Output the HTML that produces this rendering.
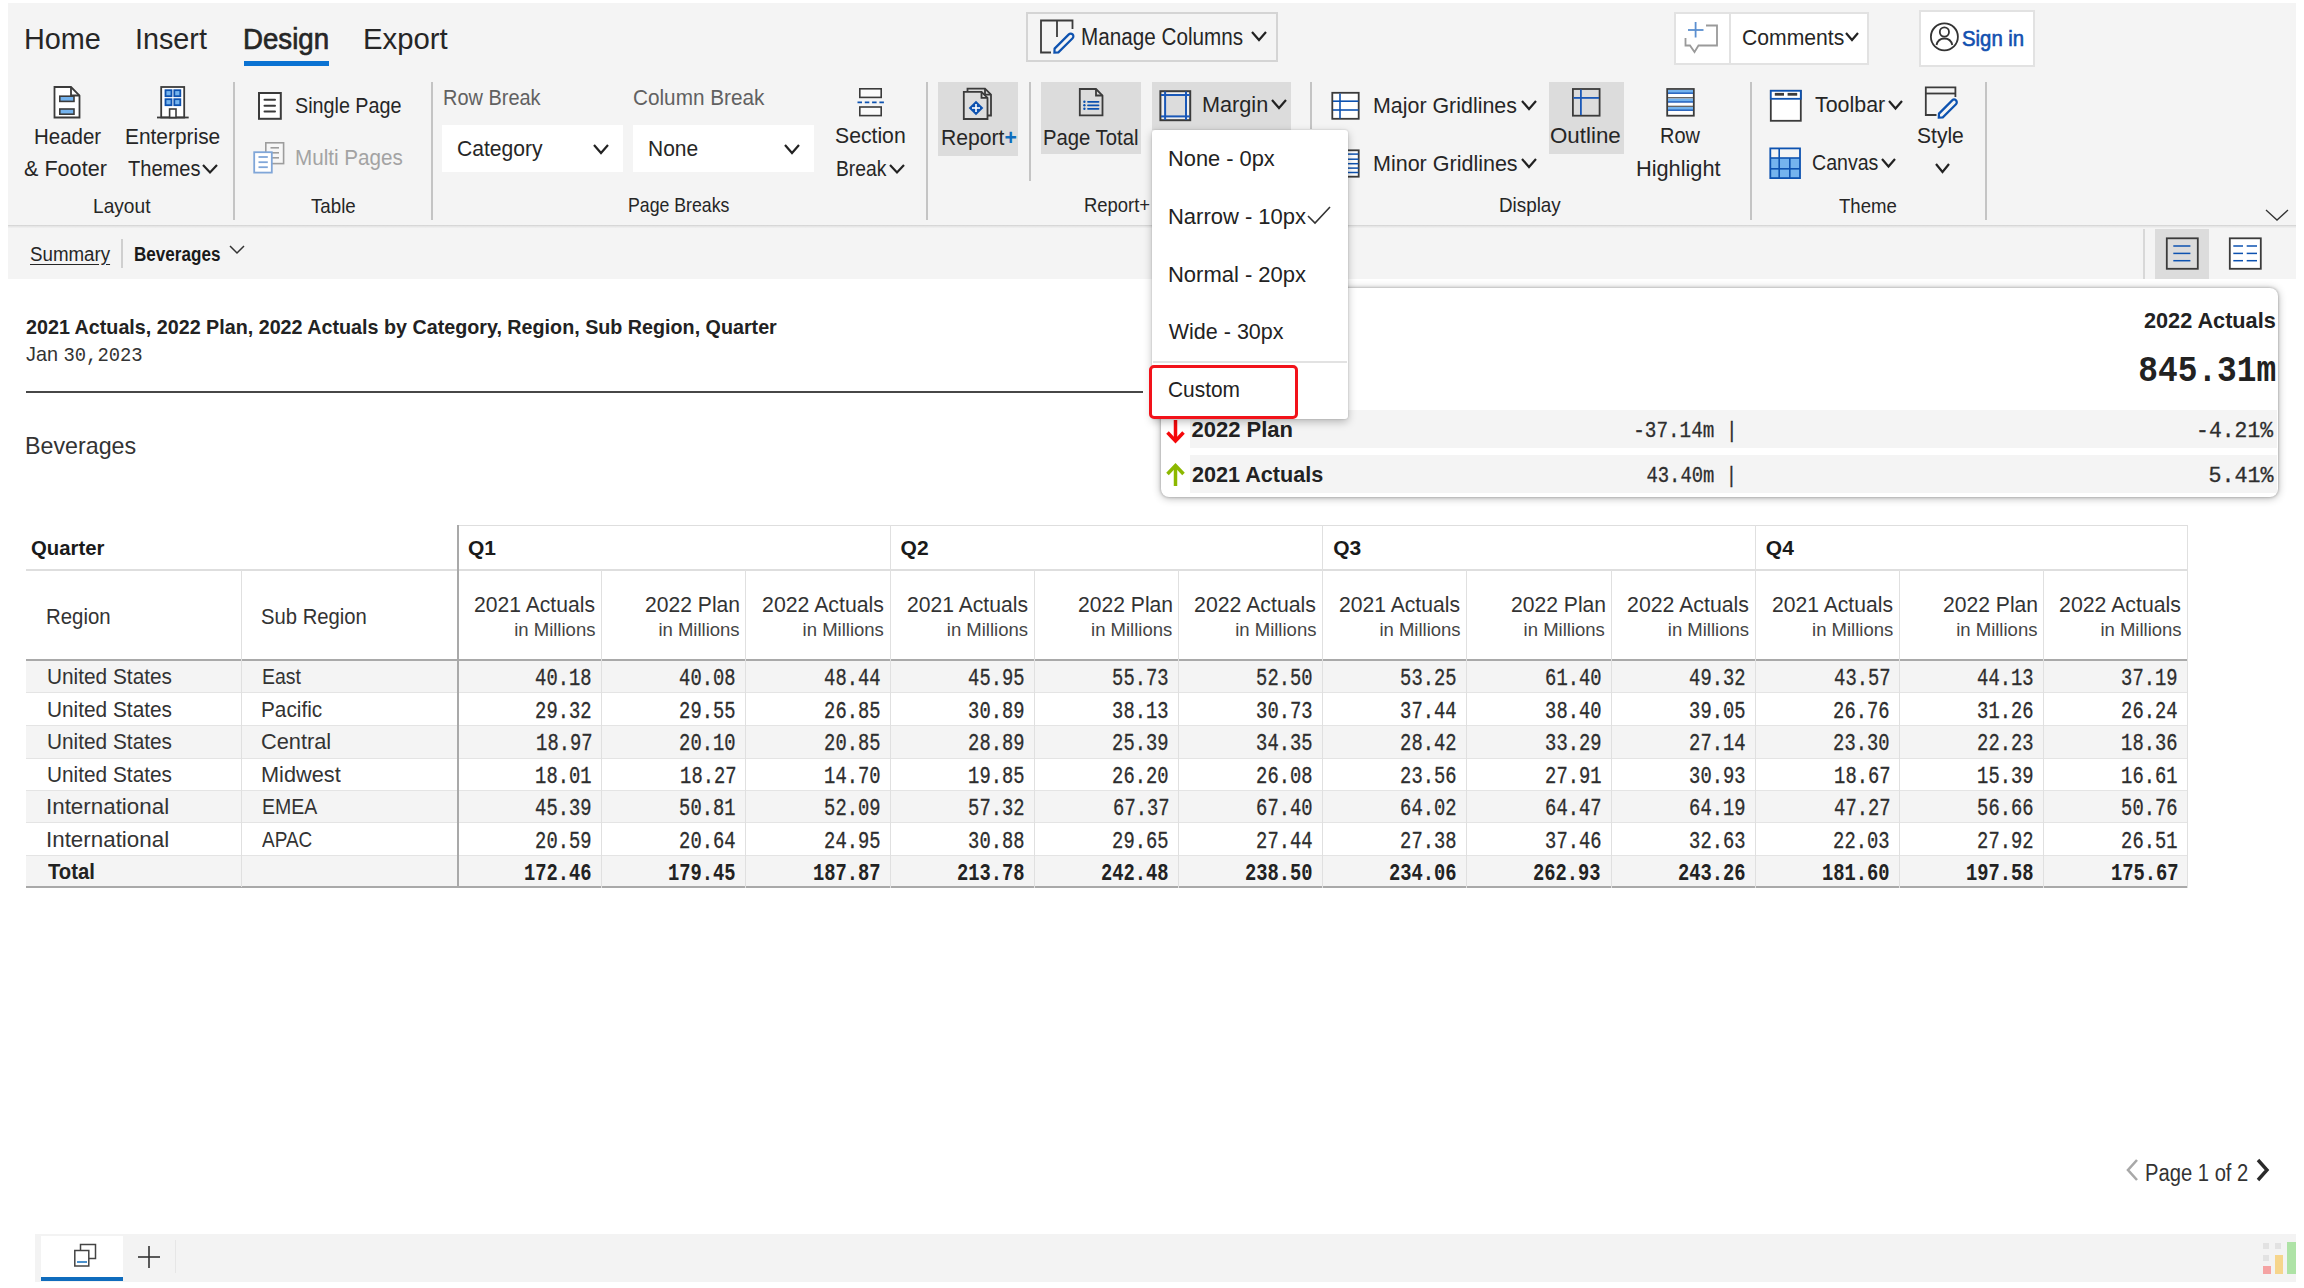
<!DOCTYPE html>
<html><head><meta charset="utf-8"><style>
html,body{margin:0;padding:0;background:#fff;width:2304px;height:1288px;overflow:hidden;position:relative}
.t{position:absolute;white-space:nowrap;line-height:normal}
.r{position:absolute;box-sizing:border-box}
</style></head><body>
<div class="r" style="left:8px;top:3px;width:2288px;height:222px;background:#f4f4f4;"></div>
<div class="r" style="left:8px;top:225px;width:2288px;height:3px;background:linear-gradient(#cfcfcf,#e6e6e6 50%,#f0f0f0);"></div>
<div class="r" style="left:8px;top:228px;width:2288px;height:51px;background:#f4f4f4;"></div>
<div class="r" style="left:35px;top:1234px;width:2261px;height:48px;background:#f3f3f3;"></div>
<div class="t" id="t1" style="top:21.9px;font-size:30px;color:#262626;font-family:'Liberation Sans', sans-serif;left:24.08px;transform-origin:left top;transform:scaleX(0.9610);">Home</div>
<div class="t" id="t2" style="top:21.9px;font-size:30px;color:#262626;font-family:'Liberation Sans', sans-serif;left:135.08px;transform-origin:left top;transform:scaleX(0.9589);">Insert</div>
<div class="t" id="t3" style="top:21.9px;font-size:30px;color:#262626;font-family:'Liberation Sans', sans-serif;left:243.16px;transform-origin:left top;transform:scaleX(0.9222);-webkit-text-stroke:0.7px #262626;">Design</div>
<div class="t" id="t4" style="top:21.9px;font-size:30px;color:#262626;font-family:'Liberation Sans', sans-serif;left:363.05px;transform-origin:left top;transform:scaleX(0.9765);">Export</div>
<div class="r" style="left:244px;top:60.5px;width:85px;height:5px;background:#0a72d2;"></div>
<div class="r" style="left:1026px;top:12px;width:252px;height:50px;background:transparent;border:2px solid #d4d4d4"></div>
<div class="t" id="t5" style="top:23.6px;font-size:23px;color:#262626;font-family:'Liberation Sans', sans-serif;left:1081.20px;transform-origin:left top;transform:scaleX(0.8989);">Manage Columns</div>
<svg class="r" style="left:1250px;top:30px;" width="18" height="12" viewBox="0 0 18 12"><polyline points="2,2 9.0,10 16,2" fill="none" stroke="#222" stroke-width="2.2" stroke-linecap="butt"/></svg>
<div class="r" style="left:1674px;top:12px;width:195px;height:53px;background:#fff;border:2px solid #e2e2e2"></div>
<div class="r" style="left:1729px;top:12px;width:2px;height:53px;background:#e2e2e2;"></div>
<div class="t" id="t6" style="top:25.1px;font-size:22px;color:#262626;font-family:'Liberation Sans', sans-serif;left:1742.04px;transform-origin:left top;transform:scaleX(0.9619);">Comments</div>
<svg class="r" style="left:1844px;top:31px;" width="16" height="11" viewBox="0 0 16 11"><polyline points="2,2 8.0,9 14,2" fill="none" stroke="#222" stroke-width="2.2" stroke-linecap="butt"/></svg>
<div class="r" style="left:1919px;top:10px;width:116px;height:57px;background:#fff;border:2px solid #e2e2e2"></div>
<div class="t" id="t7" style="top:25.5px;font-size:22px;color:#1150b0;font-family:'Liberation Sans', sans-serif;left:1962.08px;transform-origin:left top;transform:scaleX(0.9242);-webkit-text-stroke:0.6px #1150b0;">Sign in</div>
<div class="r" style="left:233px;top:82px;width:2px;height:138px;background:#c4c4c4;"></div>
<div class="r" style="left:431px;top:82px;width:2px;height:138px;background:#c4c4c4;"></div>
<div class="r" style="left:926px;top:82px;width:2px;height:138px;background:#c4c4c4;"></div>
<div class="r" style="left:1029px;top:82px;width:2px;height:99px;background:#c4c4c4;"></div>
<div class="r" style="left:1310px;top:82px;width:2px;height:47px;background:#c4c4c4;"></div>
<div class="r" style="left:1750px;top:82px;width:2px;height:138px;background:#c4c4c4;"></div>
<div class="r" style="left:1985px;top:82px;width:2px;height:138px;background:#c4c4c4;"></div>
<div class="t" id="t8" style="top:123.5px;font-size:22px;color:#262626;font-family:'Liberation Sans', sans-serif;left:33.57px;transform-origin:left top;transform:scaleX(0.9296);">Header</div>
<div class="t" id="t9" style="top:155.5px;font-size:22px;color:#262626;font-family:'Liberation Sans', sans-serif;left:24.02px;transform-origin:left top;transform:scaleX(0.9819);">&amp; Footer</div>
<div class="t" id="t10" style="top:123.5px;font-size:22px;color:#262626;font-family:'Liberation Sans', sans-serif;left:125.05px;transform-origin:left top;transform:scaleX(0.9495);">Enterprise</div>
<div class="t" id="t11" style="top:155.5px;font-size:22px;color:#262626;font-family:'Liberation Sans', sans-serif;left:127.60px;transform-origin:left top;transform:scaleX(0.9114);">Themes</div>
<svg class="r" style="left:201px;top:163px;" width="18" height="11.5" viewBox="0 0 18 11.5"><polyline points="2,2 9.0,9.5 16,2" fill="none" stroke="#222" stroke-width="2.2" stroke-linecap="butt"/></svg>
<div class="t" id="t12" style="top:193.7px;font-size:21px;color:#262626;font-family:'Liberation Sans', sans-serif;left:93.49px;transform-origin:left top;transform:scaleX(0.9113);">Layout</div>
<div class="t" id="t13" style="top:92.7px;font-size:22px;color:#262626;font-family:'Liberation Sans', sans-serif;left:294.70px;transform-origin:left top;transform:scaleX(0.8974);">Single Page</div>
<div class="t" id="t14" style="top:145.1px;font-size:22px;color:#a3a3a3;font-family:'Liberation Sans', sans-serif;left:294.66px;transform-origin:left top;transform:scaleX(0.9386);">Multi Pages</div>
<div class="t" id="t15" style="top:193.7px;font-size:21px;color:#262626;font-family:'Liberation Sans', sans-serif;left:310.50px;transform-origin:left top;transform:scaleX(0.8900);">Table</div>
<div class="t" id="t16" style="top:85.3px;font-size:22px;color:#616161;font-family:'Liberation Sans', sans-serif;left:442.79px;transform-origin:left top;transform:scaleX(0.9065);">Row Break</div>
<div class="r" style="left:442px;top:125px;width:181px;height:47px;background:#fff;"></div>
<div class="t" id="t17" style="top:136.3px;font-size:22px;color:#262626;font-family:'Liberation Sans', sans-serif;left:457.04px;transform-origin:left top;transform:scaleX(0.9591);">Category</div>
<svg class="r" style="left:592px;top:143px;" width="18" height="12" viewBox="0 0 18 12"><polyline points="2,2 9.0,10 16,2" fill="none" stroke="#222" stroke-width="2.2" stroke-linecap="butt"/></svg>
<div class="t" id="t18" style="top:85.3px;font-size:22px;color:#616161;font-family:'Liberation Sans', sans-serif;left:633.06px;transform-origin:left top;transform:scaleX(0.9424);">Column Break</div>
<div class="r" style="left:633px;top:125px;width:181px;height:47px;background:#fff;"></div>
<div class="t" id="t19" style="top:136.3px;font-size:22px;color:#262626;font-family:'Liberation Sans', sans-serif;left:648.05px;transform-origin:left top;transform:scaleX(0.9529);">None</div>
<svg class="r" style="left:783px;top:143px;" width="18" height="12" viewBox="0 0 18 12"><polyline points="2,2 9.0,10 16,2" fill="none" stroke="#222" stroke-width="2.2" stroke-linecap="butt"/></svg>
<div class="t" id="t20" style="top:123.1px;font-size:22px;color:#262626;font-family:'Liberation Sans', sans-serif;left:835.44px;transform-origin:left top;transform:scaleX(0.9634);">Section</div>
<div class="t" id="t21" style="top:155.8px;font-size:22px;color:#262626;font-family:'Liberation Sans', sans-serif;left:835.52px;transform-origin:left top;transform:scaleX(0.8772);">Break</div>
<svg class="r" style="left:888px;top:163px;" width="18" height="11.5" viewBox="0 0 18 11.5"><polyline points="2,2 9.0,9.5 16,2" fill="none" stroke="#222" stroke-width="2.2" stroke-linecap="butt"/></svg>
<div class="t" id="t22" style="top:192.7px;font-size:21px;color:#262626;font-family:'Liberation Sans', sans-serif;left:627.96px;transform-origin:left top;transform:scaleX(0.8437);">Page Breaks</div>
<div class="r" style="left:938px;top:82px;width:80px;height:74px;background:#dcdcdc;"></div>
<div class="t" id="t23" style="top:124.8px;font-size:22px;color:#262626;font-family:'Liberation Sans', sans-serif;left:940.54px;transform-origin:left top;transform:scaleX(0.9610);">Report<span style="color:#0f6cbd;font-weight:700">+</span></div>
<div class="r" style="left:1041px;top:82px;width:100px;height:72px;background:#dcdcdc;"></div>
<div class="t" id="t24" style="top:124.8px;font-size:22px;color:#262626;font-family:'Liberation Sans', sans-serif;left:1043.38px;transform-origin:left top;transform:scaleX(0.9216);">Page Total</div>
<div class="r" style="left:1152px;top:82px;width:139px;height:48px;background:#dcdcdc;"></div>
<div class="t" id="t25" style="top:91.9px;font-size:22px;color:#262626;font-family:'Liberation Sans', sans-serif;left:1202.42px;transform-origin:left top;transform:scaleX(0.9846);">Margin</div>
<svg class="r" style="left:1270px;top:98px;" width="18" height="12" viewBox="0 0 18 12"><polyline points="2,2 9.0,10 16,2" fill="none" stroke="#222" stroke-width="2.2" stroke-linecap="butt"/></svg>
<div class="t" id="t26" style="top:192.7px;font-size:21px;color:#262626;font-family:'Liberation Sans', sans-serif;left:1084.12px;transform-origin:left top;transform:scaleX(0.8784);">Report+</div>
<div class="t" id="t27" style="top:92.6px;font-size:22px;color:#262626;font-family:'Liberation Sans', sans-serif;left:1373.03px;transform-origin:left top;transform:scaleX(0.9728);">Major Gridlines</div>
<svg class="r" style="left:1520px;top:99px;" width="18" height="12" viewBox="0 0 18 12"><polyline points="2,2 9.0,10 16,2" fill="none" stroke="#222" stroke-width="2.2" stroke-linecap="butt"/></svg>
<div class="t" id="t28" style="top:150.5px;font-size:22px;color:#262626;font-family:'Liberation Sans', sans-serif;left:1373.02px;transform-origin:left top;transform:scaleX(0.9776);">Minor Gridlines</div>
<svg class="r" style="left:1520px;top:157px;" width="18" height="12" viewBox="0 0 18 12"><polyline points="2,2 9.0,10 16,2" fill="none" stroke="#222" stroke-width="2.2" stroke-linecap="butt"/></svg>
<div class="r" style="left:1549px;top:82px;width:75px;height:72px;background:#dcdcdc;"></div>
<div class="t" id="t29" style="top:123.1px;font-size:22px;color:#262626;font-family:'Liberation Sans', sans-serif;left:1550.49px;transform-origin:left top;transform:scaleX(1.0147);">Outline</div>
<div class="t" id="t30" style="top:123.1px;font-size:22px;color:#262626;font-family:'Liberation Sans', sans-serif;left:1660.49px;transform-origin:left top;transform:scaleX(0.9070);">Row</div>
<div class="t" id="t31" style="top:155.5px;font-size:22px;color:#262626;font-family:'Liberation Sans', sans-serif;left:1636.01px;transform-origin:left top;transform:scaleX(0.9882);">Highlight</div>
<div class="t" id="t32" style="top:192.7px;font-size:21px;color:#262626;font-family:'Liberation Sans', sans-serif;left:1498.70px;transform-origin:left top;transform:scaleX(0.8971);">Display</div>
<div class="t" id="t33" style="top:92.4px;font-size:22px;color:#262626;font-family:'Liberation Sans', sans-serif;left:1814.70px;transform-origin:left top;transform:scaleX(0.9722);">Toolbar</div>
<svg class="r" style="left:1887px;top:99px;" width="17" height="11.5" viewBox="0 0 17 11.5"><polyline points="2,2 8.5,9.5 15,2" fill="none" stroke="#222" stroke-width="2.2" stroke-linecap="butt"/></svg>
<div class="t" id="t34" style="top:149.9px;font-size:22px;color:#262626;font-family:'Liberation Sans', sans-serif;left:1812.11px;transform-origin:left top;transform:scaleX(0.8904);">Canvas</div>
<svg class="r" style="left:1880px;top:157px;" width="17" height="11.5" viewBox="0 0 17 11.5"><polyline points="2,2 8.5,9.5 15,2" fill="none" stroke="#222" stroke-width="2.2" stroke-linecap="butt"/></svg>
<div class="t" id="t35" style="top:123.0px;font-size:22px;color:#262626;font-family:'Liberation Sans', sans-serif;left:1917.24px;transform-origin:left top;transform:scaleX(0.9574);">Style</div>
<svg class="r" style="left:1934px;top:162px;" width="17" height="12" viewBox="0 0 17 12"><polyline points="2,2 8.5,10 15,2" fill="none" stroke="#222" stroke-width="2.2" stroke-linecap="butt"/></svg>
<div class="t" id="t36" style="top:193.7px;font-size:21px;color:#262626;font-family:'Liberation Sans', sans-serif;left:1839.00px;transform-origin:left top;transform:scaleX(0.8862);">Theme</div>
<svg class="r" style="left:2264px;top:207px;" width="26" height="16" viewBox="0 0 26 16"><polyline points="2,3 13,13 24,3" fill="none" stroke="#333" stroke-width="1.3"/></svg>
<div class="t" id="t37" style="top:243.1px;font-size:19.5px;color:#262626;font-family:'Liberation Sans', sans-serif;left:29.80px;transform-origin:left top;transform:scaleX(0.9595);text-decoration:underline;text-underline-offset:3px;">Summary</div>
<div class="r" style="left:121px;top:239px;width:2px;height:29px;background:#cfcfcf;"></div>
<div class="t" id="t38" style="top:243.1px;font-size:19.5px;color:#1a1a1a;font-family:'Liberation Sans', sans-serif;font-weight:700;left:134.12px;transform-origin:left top;transform:scaleX(0.8763);">Beverages</div>
<svg class="r" style="left:228px;top:243px;" width="18" height="14" viewBox="0 0 18 14"><polyline points="2,3 9,10 16,3" fill="none" stroke="#333" stroke-width="1.5"/></svg>
<div class="r" style="left:2143px;top:229px;width:2px;height:50px;background:#d8d8d8;"></div>
<div class="r" style="left:2155px;top:229px;width:54px;height:50px;background:#dcdcdc;"></div>
<svg class="r" style="left:0;top:0" width="2304" height="300" viewBox="0 0 2304 300"><path d="M1051,52.5 H1041 V20.5 H1072.5 V29" stroke="#3b3b3b" stroke-width="1.8" fill="none" stroke-linejoin="miter" /><line x1="1057" y1="20.5" x2="1057" y2="37" stroke="#3b3b3b" stroke-width="1.8" stroke-linecap="butt"/><path d="M1054.4,52.6 L1054.6,48.6 L1068.8,34.4 A2.6,2.6 0 0 1 1072.6,38.2 L1058.4,52.4 Z" stroke="#0d52b0" stroke-width="2.2" fill="none" stroke-linejoin="miter" /><path d="M1706,25.5 H1717 V45.5 H1698.5 L1694.5,52 L1690,45.5 H1685.5 V38" stroke="#9a9a9a" stroke-width="1.8" fill="none" stroke-linejoin="miter" /><line x1="1695.6" y1="22" x2="1695.6" y2="37.5" stroke="#5b8fd0" stroke-width="1.8" stroke-linecap="butt"/><line x1="1688" y1="30" x2="1703.5" y2="30" stroke="#5b8fd0" stroke-width="1.8" stroke-linecap="butt"/><circle cx="1944.4" cy="36.8" r="13.5" stroke="#333" stroke-width="1.8" fill="none"/><circle cx="1944.4" cy="32" r="4.6" stroke="#333" stroke-width="1.8" fill="none"/><path d="M1936.5,45 Q1938,38.5 1944.4,38.5 Q1950.8,38.5 1952.3,45" stroke="#333" stroke-width="1.8" fill="none" stroke-linejoin="miter" /><path d="M54.5,87 H71 L79.5,95.5 V117.5 H54.5 Z" stroke="#3b3b3b" stroke-width="1.8" fill="#fff" stroke-linejoin="miter" /><path d="M71,87 V95.5 H79.5" stroke="#3b3b3b" stroke-width="1.8" fill="none" stroke-linejoin="miter" /><rect x="59.8" y="96.2" width="14.2" height="5.2" stroke="#3b3b3b" stroke-width="1.6" fill="#74b3ee"/><rect x="59.8" y="109" width="14.2" height="5.2" stroke="#3b3b3b" stroke-width="1.6" fill="#74b3ee"/><rect x="161.2" y="87" width="23" height="30.5" stroke="#3b3b3b" stroke-width="1.8" fill="#fff"/><line x1="157" y1="117.5" x2="188.7" y2="117.5" stroke="#3b3b3b" stroke-width="1.8" stroke-linecap="butt"/><rect x="165.5" y="90.2" width="6" height="6" stroke="#0d52b0" stroke-width="1.8" fill="#74b3ee"/><rect x="165.5" y="99.2" width="6" height="6" stroke="#0d52b0" stroke-width="1.8" fill="#74b3ee"/><rect x="174.3" y="90.2" width="6" height="6" stroke="#0d52b0" stroke-width="1.8" fill="#74b3ee"/><rect x="174.3" y="99.2" width="6" height="6" stroke="#0d52b0" stroke-width="1.8" fill="#74b3ee"/><rect x="169.6" y="109" width="6.4" height="8.5" stroke="#3b3b3b" stroke-width="1.6" fill="#fff"/><rect x="259" y="93" width="21.8" height="25.8" stroke="#3b3b3b" stroke-width="2" fill="#fff"/><line x1="264.5" y1="99.8" x2="275" y2="99.8" stroke="#3b3b3b" stroke-width="2" stroke-linecap="round"/><line x1="264.5" y1="105.8" x2="275" y2="105.8" stroke="#3b3b3b" stroke-width="2" stroke-linecap="round"/><line x1="264.5" y1="111.6" x2="275" y2="111.6" stroke="#3b3b3b" stroke-width="2" stroke-linecap="round"/><rect x="265.8" y="142.8" width="17.8" height="20.8" stroke="#9d9d9d" stroke-width="1.6" fill="#f7f7f7"/><line x1="270.5" y1="147.8" x2="279" y2="147.8" stroke="#9d9d9d" stroke-width="1.6" stroke-linecap="butt"/><line x1="270.5" y1="152.8" x2="279" y2="152.8" stroke="#9d9d9d" stroke-width="1.6" stroke-linecap="butt"/><line x1="270.5" y1="157.8" x2="279" y2="157.8" stroke="#9d9d9d" stroke-width="1.6" stroke-linecap="butt"/><rect x="254.2" y="152.2" width="17.6" height="20.4" stroke="#80a6d8" stroke-width="1.8" fill="#fff"/><line x1="258.5" y1="157" x2="267.8" y2="157" stroke="#80a6d8" stroke-width="1.8" stroke-linecap="butt"/><line x1="258.5" y1="162.2" x2="267.8" y2="162.2" stroke="#80a6d8" stroke-width="1.8" stroke-linecap="butt"/><line x1="258.5" y1="167.2" x2="267.8" y2="167.2" stroke="#80a6d8" stroke-width="1.8" stroke-linecap="butt"/><rect x="859.8" y="88.8" width="21.4" height="8.6" stroke="#3b3b3b" stroke-width="1.6" fill="#fafafa"/><rect x="859.8" y="107" width="21.4" height="8.6" stroke="#3b3b3b" stroke-width="1.6" fill="#fafafa"/><line x1="857.5" y1="102.3" x2="884" y2="102.3" stroke="#0d52b0" stroke-width="1.8" stroke-dasharray="4.5,2.8"/><path d="M967.5,91 V88.7 H985 L991,94.7 V115.5 H988" stroke="#3b3b3b" stroke-width="1.8" fill="none" stroke-linejoin="miter" /><path d="M963.8,91.8 H981.5 L987.5,97.8 V119 H963.8 Z" stroke="#3b3b3b" stroke-width="1.8" fill="#dedede" stroke-linejoin="miter" /><path d="M981.5,91.8 V97.8 H987.5" stroke="#3b3b3b" stroke-width="1.8" fill="none" stroke-linejoin="miter" /><path d="M985,88.7 V94.7 H991" stroke="#3b3b3b" stroke-width="1.8" fill="none" stroke-linejoin="miter" /><path d="M976,100.8 L983.3,108 L976,115.2 L968.7,108 Z" fill="#0d52b0"/><line x1="976" y1="104" x2="976" y2="112" stroke="#fff" stroke-width="1.6" stroke-linecap="butt"/><line x1="972" y1="108" x2="980" y2="108" stroke="#fff" stroke-width="1.6" stroke-linecap="butt"/><path d="M1079.8,89 H1096 L1102.5,95.5 V115.3 H1079.8 Z" stroke="#3b3b3b" stroke-width="1.8" fill="#dcdcdc" stroke-linejoin="miter" /><path d="M1096,89 V95.5 H1102.5" stroke="#3b3b3b" stroke-width="1.8" fill="none" stroke-linejoin="miter" /><circle cx="1084.4" cy="101.8" r="1.2" fill="#0d52b0"/><line x1="1088" y1="101.8" x2="1098.5" y2="101.8" stroke="#0d52b0" stroke-width="1.8" stroke-linecap="round"/><circle cx="1084.4" cy="105.3" r="1.2" fill="#0d52b0"/><line x1="1088" y1="105.3" x2="1098.5" y2="105.3" stroke="#0d52b0" stroke-width="1.8" stroke-linecap="round"/><circle cx="1084.4" cy="108.8" r="1.2" fill="#0d52b0"/><line x1="1088" y1="108.8" x2="1098.5" y2="108.8" stroke="#0d52b0" stroke-width="1.8" stroke-linecap="round"/><rect x="1160.4" y="91.2" width="29.8" height="29" stroke="#3b3b3b" stroke-width="2" fill="#efefef"/><rect x="1165.1" y="95" width="20.9" height="21.4" fill="#dcdcdc"/><line x1="1165.1" y1="91.5" x2="1165.1" y2="120" stroke="#1a58b8" stroke-width="2" stroke-linecap="butt"/><line x1="1186" y1="91.5" x2="1186" y2="120" stroke="#1a58b8" stroke-width="2" stroke-linecap="butt"/><line x1="1161" y1="95" x2="1190" y2="95" stroke="#1a58b8" stroke-width="2" stroke-linecap="butt"/><line x1="1161" y1="116.4" x2="1190" y2="116.4" stroke="#1a58b8" stroke-width="2" stroke-linecap="butt"/><rect x="1332.3" y="92.8" width="26.4" height="26" stroke="#3b3b3b" stroke-width="1.8" fill="#fff"/><line x1="1340" y1="93.5" x2="1340" y2="118.5" stroke="#0d52b0" stroke-width="1.6" stroke-linecap="butt"/><line x1="1333" y1="101.2" x2="1358.5" y2="101.2" stroke="#0d52b0" stroke-width="1.6" stroke-linecap="butt"/><line x1="1333" y1="110" x2="1358.5" y2="110" stroke="#0d52b0" stroke-width="1.6" stroke-linecap="butt"/><rect x="1332.3" y="150.3" width="26.4" height="26.4" stroke="#3b3b3b" stroke-width="1.8" fill="#fff"/><line x1="1333" y1="154.1" x2="1358.5" y2="154.1" stroke="#0d52b0" stroke-width="1.5" stroke-linecap="butt"/><line x1="1333" y1="159.2" x2="1358.5" y2="159.2" stroke="#0d52b0" stroke-width="1.5" stroke-linecap="butt"/><line x1="1333" y1="163.7" x2="1358.5" y2="163.7" stroke="#0d52b0" stroke-width="1.5" stroke-linecap="butt"/><line x1="1333" y1="168.1" x2="1358.5" y2="168.1" stroke="#0d52b0" stroke-width="1.5" stroke-linecap="butt"/><line x1="1333" y1="172.5" x2="1358.5" y2="172.5" stroke="#0d52b0" stroke-width="1.5" stroke-linecap="butt"/><rect x="1572.9" y="89" width="26.7" height="26.7" stroke="#3b3b3b" stroke-width="1.8" fill="#dcdcdc"/><line x1="1580.9" y1="89.5" x2="1580.9" y2="115" stroke="#1a58b8" stroke-width="1.8" stroke-linecap="butt"/><line x1="1573.5" y1="97.9" x2="1599" y2="97.9" stroke="#1a58b8" stroke-width="1.8" stroke-linecap="butt"/><rect x="1667.2" y="89" width="26.6" height="26.7" stroke="#3b3b3b" stroke-width="1.8" fill="#fff"/><rect x="1668" y="89.9" width="25" height="3.299999999999997" fill="#74b3ee"/><line x1="1668" y1="93.2" x2="1693" y2="93.2" stroke="#1a58b8" stroke-width="1.4" stroke-linecap="butt"/><rect x="1668" y="98.5" width="25" height="3.5" fill="#74b3ee"/><line x1="1668" y1="102" x2="1693" y2="102" stroke="#1a58b8" stroke-width="1.4" stroke-linecap="butt"/><line x1="1668" y1="97.7" x2="1693" y2="97.7" stroke="#555" stroke-width="1.2" stroke-linecap="butt"/><rect x="1668" y="107" width="25" height="3.200000000000003" fill="#74b3ee"/><line x1="1668" y1="110.2" x2="1693" y2="110.2" stroke="#1a58b8" stroke-width="1.4" stroke-linecap="butt"/><line x1="1668" y1="106.3" x2="1693" y2="106.3" stroke="#555" stroke-width="1.2" stroke-linecap="butt"/><rect x="1770.8" y="90.8" width="30" height="30" stroke="#3b3b3b" stroke-width="1.8" fill="#fff"/><rect x="1770.8" y="90.8" width="30" height="8" stroke="#0d52b0" stroke-width="1.8" fill="#fff"/><line x1="1774.8" y1="94.3" x2="1784" y2="94.3" stroke="#3b3b3b" stroke-width="2.8" stroke-linecap="butt"/><line x1="1787.6" y1="94.3" x2="1797.2" y2="94.3" stroke="#3b3b3b" stroke-width="2.8" stroke-linecap="butt"/><rect x="1770.3" y="158" width="29.7" height="20.1" fill="#74b3ee"/><rect x="1770.3" y="148.4" width="29.7" height="29.7" stroke="#0d52b0" stroke-width="1.8" fill="none"/><line x1="1779.2" y1="148.4" x2="1779.2" y2="178" stroke="#0d52b0" stroke-width="1.6" stroke-linecap="butt"/><line x1="1789.8" y1="158" x2="1789.8" y2="178" stroke="#0d52b0" stroke-width="1.6" stroke-linecap="butt"/><line x1="1770.3" y1="158" x2="1800" y2="158" stroke="#0d52b0" stroke-width="1.6" stroke-linecap="butt"/><line x1="1770.3" y1="168.8" x2="1800" y2="168.8" stroke="#0d52b0" stroke-width="1.6" stroke-linecap="butt"/><path d="M1936.5,115 H1925.8 V87.4 H1955.4 V97" stroke="#3b3b3b" stroke-width="1.8" fill="none" stroke-linejoin="miter" /><line x1="1925.8" y1="93.5" x2="1955.4" y2="93.5" stroke="#3b3b3b" stroke-width="1.8" stroke-linecap="butt"/><path d="M1938.8,117.6 L1939,113.6 L1952.2,100.4 A2.6,2.6 0 0 1 1956,104.2 L1942.8,117.4 Z" stroke="#0d52b0" stroke-width="2.2" fill="none" stroke-linejoin="miter" /><rect x="2166.8" y="238.3" width="31" height="30.5" stroke="#3b3b3b" stroke-width="1.8" fill="none"/><line x1="2173.3" y1="246" x2="2190.4" y2="246" stroke="#0d52b0" stroke-width="1.5" stroke-linecap="butt"/><line x1="2173.3" y1="253.4" x2="2190.4" y2="253.4" stroke="#0d52b0" stroke-width="1.5" stroke-linecap="butt"/><line x1="2173.3" y1="260.7" x2="2190.4" y2="260.7" stroke="#0d52b0" stroke-width="1.5" stroke-linecap="butt"/><rect x="2229.8" y="238.3" width="31" height="30.5" stroke="#3b3b3b" stroke-width="1.8" fill="#fff"/><line x1="2233.3" y1="246" x2="2243" y2="246" stroke="#0d52b0" stroke-width="1.5" stroke-linecap="butt"/><line x1="2246.7" y1="246" x2="2257" y2="246" stroke="#0d52b0" stroke-width="1.5" stroke-linecap="butt"/><line x1="2233.3" y1="253.4" x2="2243" y2="253.4" stroke="#0d52b0" stroke-width="1.5" stroke-linecap="butt"/><line x1="2246.7" y1="253.4" x2="2257" y2="253.4" stroke="#0d52b0" stroke-width="1.5" stroke-linecap="butt"/><line x1="2233.3" y1="260.7" x2="2243" y2="260.7" stroke="#0d52b0" stroke-width="1.5" stroke-linecap="butt"/><line x1="2246.7" y1="260.7" x2="2257" y2="260.7" stroke="#0d52b0" stroke-width="1.5" stroke-linecap="butt"/></svg>
<div class="t" id="t39" style="top:315.2px;font-size:21px;color:#222;font-family:'Liberation Sans', sans-serif;font-weight:700;left:26.40px;transform-origin:left top;transform:scaleX(0.9387);">2021 Actuals, 2022 Plan, 2022 Actuals by Category, Region, Sub Region, Quarter</div>
<div class="t" id="t40" style="top:342.3px;font-size:21px;color:#333;font-family:'Liberation Sans', sans-serif;left:26.40px;transform-origin:left top;transform:scaleX(0.9431);">Jan <span style="font-family:'Liberation Mono';font-size:20px">30,2023</span></div>
<div class="r" style="left:26px;top:391px;width:1117px;height:2px;background:#474747;"></div>
<div class="t" id="t41" style="top:432.2px;font-size:24px;color:#333;font-family:'Liberation Sans', sans-serif;left:25.26px;transform-origin:left top;transform:scaleX(0.9688);">Beverages</div>
<div class="r" style="left:1161px;top:288px;width:1117px;height:209px;background:#fff;border-radius:8px;box-shadow:0 0 3px rgba(0,0,0,0.3),0 1px 8px rgba(0,0,0,0.3)"></div>
<div class="t" id="t42" style="top:307.9px;font-size:22px;color:#222;font-family:'Liberation Sans', sans-serif;font-weight:700;right:28.29px;transform-origin:right top;transform:scaleX(0.9850);">2022 Actuals</div>
<div class="t" id="t43" style="top:350.5px;font-size:36px;color:#222;font-family:'Liberation Mono', monospace;font-weight:700;right:27.87px;transform-origin:right top;transform:scaleX(0.9122);">845.31m</div>
<div class="r" style="left:1190px;top:410px;width:1087px;height:38px;background:#f4f4f4;"></div>
<div class="r" style="left:1190px;top:455px;width:1087px;height:38px;background:#f4f4f4;"></div>
<div class="t" id="t44" style="top:417.2px;font-size:22px;color:#222;font-family:'Liberation Sans', sans-serif;font-weight:700;left:1191.50px;transform-origin:left top;">2022 Plan</div>
<div class="t" id="t45" style="top:461.6px;font-size:22px;color:#222;font-family:'Liberation Sans', sans-serif;font-weight:700;left:1191.50px;transform-origin:left top;transform:scaleX(0.9812);">2021 Actuals</div>
<div class="t" id="t46" style="top:418.3px;font-size:22.5px;color:#2e2e2e;font-family:'Liberation Mono', monospace;right:566.25px;transform-origin:right top;transform:scaleX(0.8584);-webkit-text-stroke:0.3px #2e2e2e;">-37.14m |</div>
<div class="t" id="t47" style="top:463.0px;font-size:22.5px;color:#2e2e2e;font-family:'Liberation Mono', monospace;right:566.78px;transform-origin:right top;transform:scaleX(0.8382);-webkit-text-stroke:0.3px #2e2e2e;">43.40m |</div>
<div class="t" id="t48" style="top:418.3px;font-size:22.5px;color:#2e2e2e;font-family:'Liberation Mono', monospace;right:30.93px;transform-origin:right top;transform:scaleX(0.9494);-webkit-text-stroke:0.3px #2e2e2e;">-4.21%</div>
<div class="t" id="t49" style="top:463.0px;font-size:22.5px;color:#2e2e2e;font-family:'Liberation Mono', monospace;right:30.47px;transform-origin:right top;transform:scaleX(0.9627);-webkit-text-stroke:0.3px #2e2e2e;">5.41%</div>
<svg class="r" style="left:1160px;top:415px;" width="30" height="32" viewBox="0 0 30 32"><line x1="15.5" y1="5" x2="15.5" y2="25" stroke="#f5080a" stroke-width="3.5"/><polyline points="7.5,17.5 15.5,26 23.5,17.5" fill="none" stroke="#f5080a" stroke-width="3.5"/></svg>
<svg class="r" style="left:1160px;top:460px;" width="30" height="32" viewBox="0 0 30 32"><line x1="15.5" y1="6" x2="15.5" y2="26" stroke="#8cb800" stroke-width="3.5"/><polyline points="7.5,14 15.5,5.5 23.5,14" fill="none" stroke="#8cb800" stroke-width="3.5"/></svg>
<div class="r" style="left:26px;top:661px;width:2162px;height:32px;background:#f4f4f4;"></div>
<div class="r" style="left:26px;top:726px;width:2162px;height:32px;background:#f4f4f4;"></div>
<div class="r" style="left:26px;top:791px;width:2162px;height:32px;background:#f4f4f4;"></div>
<div class="r" style="left:26px;top:856px;width:2162px;height:32px;background:#f4f4f4;"></div>
<div class="r" style="left:457px;top:525px;width:1731px;height:1px;background:#dedede;"></div>
<div class="r" style="left:26px;top:569px;width:2162px;height:1.5px;background:#dedede;"></div>
<div class="r" style="left:26px;top:692px;width:2162px;height:1px;background:#e4e4e4;"></div>
<div class="r" style="left:26px;top:725px;width:2162px;height:1px;background:#e4e4e4;"></div>
<div class="r" style="left:26px;top:758px;width:2162px;height:1px;background:#e4e4e4;"></div>
<div class="r" style="left:26px;top:790px;width:2162px;height:1px;background:#e4e4e4;"></div>
<div class="r" style="left:26px;top:822px;width:2162px;height:1px;background:#e4e4e4;"></div>
<div class="r" style="left:26px;top:855px;width:2162px;height:1px;background:#e4e4e4;"></div>
<div class="r" style="left:26px;top:659px;width:2162px;height:2px;background:#a9a9a9;"></div>
<div class="r" style="left:26px;top:886px;width:2162px;height:2px;background:#a9a9a9;"></div>
<div class="r" style="left:241px;top:570px;width:1px;height:317px;background:#e0e0e0;"></div>
<div class="r" style="left:457px;top:525px;width:2px;height:363px;background:#a9a9a9;"></div>
<div class="r" style="left:601px;top:570px;width:1px;height:318px;background:#e0e0e0;"></div>
<div class="r" style="left:745px;top:570px;width:1px;height:318px;background:#e0e0e0;"></div>
<div class="r" style="left:890px;top:525px;width:1px;height:363px;background:#e0e0e0;"></div>
<div class="r" style="left:1034px;top:570px;width:1px;height:318px;background:#e0e0e0;"></div>
<div class="r" style="left:1178px;top:570px;width:1px;height:318px;background:#e0e0e0;"></div>
<div class="r" style="left:1322px;top:525px;width:1px;height:363px;background:#e0e0e0;"></div>
<div class="r" style="left:1466px;top:570px;width:1px;height:318px;background:#e0e0e0;"></div>
<div class="r" style="left:1611px;top:570px;width:1px;height:318px;background:#e0e0e0;"></div>
<div class="r" style="left:1755px;top:525px;width:1px;height:363px;background:#e0e0e0;"></div>
<div class="r" style="left:1899px;top:570px;width:1px;height:318px;background:#e0e0e0;"></div>
<div class="r" style="left:2043px;top:570px;width:1px;height:318px;background:#e0e0e0;"></div>
<div class="r" style="left:2187px;top:525px;width:1px;height:363px;background:#e0e0e0;"></div>
<div class="t" id="t50" style="top:535.8px;font-size:21px;color:#1a1a1a;font-family:'Liberation Sans', sans-serif;font-weight:700;left:31.03px;transform-origin:left top;transform:scaleX(0.9680);">Quarter</div>
<div class="t" id="t51" style="top:535.9px;font-size:21px;color:#1a1a1a;font-family:'Liberation Sans', sans-serif;font-weight:700;left:468.00px;transform-origin:left top;">Q1</div>
<div class="t" id="t52" style="top:535.9px;font-size:21px;color:#1a1a1a;font-family:'Liberation Sans', sans-serif;font-weight:700;left:900.60px;transform-origin:left top;">Q2</div>
<div class="t" id="t53" style="top:535.9px;font-size:21px;color:#1a1a1a;font-family:'Liberation Sans', sans-serif;font-weight:700;left:1333.20px;transform-origin:left top;">Q3</div>
<div class="t" id="t54" style="top:535.9px;font-size:21px;color:#1a1a1a;font-family:'Liberation Sans', sans-serif;font-weight:700;left:1765.80px;transform-origin:left top;">Q4</div>
<div class="t" id="t55" style="top:603.6px;font-size:22px;color:#333;font-family:'Liberation Sans', sans-serif;left:45.77px;transform-origin:left top;transform:scaleX(0.9265);">Region</div>
<div class="t" id="t56" style="top:603.6px;font-size:22px;color:#333;font-family:'Liberation Sans', sans-serif;left:261.48px;transform-origin:left top;transform:scaleX(0.9204);">Sub Region</div>
<div class="t" id="t57" style="top:591.8px;font-size:22px;color:#333;font-family:'Liberation Sans', sans-serif;right:1708.82px;transform-origin:right top;transform:scaleX(0.9600);">2021 Actuals</div>
<div class="t" id="t58" style="top:619.0px;font-size:18.5px;color:#444;font-family:'Liberation Sans', sans-serif;right:1708.58px;transform-origin:right top;">in Millions</div>
<div class="t" id="t59" style="top:591.8px;font-size:22px;color:#333;font-family:'Liberation Sans', sans-serif;right:1563.55px;transform-origin:right top;transform:scaleX(0.9588);">2022 Plan</div>
<div class="t" id="t60" style="top:619.0px;font-size:18.5px;color:#444;font-family:'Liberation Sans', sans-serif;right:1564.38px;transform-origin:right top;">in Millions</div>
<div class="t" id="t61" style="top:591.8px;font-size:22px;color:#333;font-family:'Liberation Sans', sans-serif;right:1420.42px;transform-origin:right top;transform:scaleX(0.9680);">2022 Actuals</div>
<div class="t" id="t62" style="top:619.0px;font-size:18.5px;color:#444;font-family:'Liberation Sans', sans-serif;right:1420.18px;transform-origin:right top;">in Millions</div>
<div class="t" id="t63" style="top:591.8px;font-size:22px;color:#333;font-family:'Liberation Sans', sans-serif;right:1276.22px;transform-origin:right top;transform:scaleX(0.9600);">2021 Actuals</div>
<div class="t" id="t64" style="top:619.0px;font-size:18.5px;color:#444;font-family:'Liberation Sans', sans-serif;right:1275.98px;transform-origin:right top;">in Millions</div>
<div class="t" id="t65" style="top:591.8px;font-size:22px;color:#333;font-family:'Liberation Sans', sans-serif;right:1130.95px;transform-origin:right top;transform:scaleX(0.9588);">2022 Plan</div>
<div class="t" id="t66" style="top:619.0px;font-size:18.5px;color:#444;font-family:'Liberation Sans', sans-serif;right:1131.78px;transform-origin:right top;">in Millions</div>
<div class="t" id="t67" style="top:591.8px;font-size:22px;color:#333;font-family:'Liberation Sans', sans-serif;right:987.82px;transform-origin:right top;transform:scaleX(0.9680);">2022 Actuals</div>
<div class="t" id="t68" style="top:619.0px;font-size:18.5px;color:#444;font-family:'Liberation Sans', sans-serif;right:987.58px;transform-origin:right top;">in Millions</div>
<div class="t" id="t69" style="top:591.8px;font-size:22px;color:#333;font-family:'Liberation Sans', sans-serif;right:843.62px;transform-origin:right top;transform:scaleX(0.9600);">2021 Actuals</div>
<div class="t" id="t70" style="top:619.0px;font-size:18.5px;color:#444;font-family:'Liberation Sans', sans-serif;right:843.38px;transform-origin:right top;">in Millions</div>
<div class="t" id="t71" style="top:591.8px;font-size:22px;color:#333;font-family:'Liberation Sans', sans-serif;right:698.35px;transform-origin:right top;transform:scaleX(0.9588);">2022 Plan</div>
<div class="t" id="t72" style="top:619.0px;font-size:18.5px;color:#444;font-family:'Liberation Sans', sans-serif;right:699.18px;transform-origin:right top;">in Millions</div>
<div class="t" id="t73" style="top:591.8px;font-size:22px;color:#333;font-family:'Liberation Sans', sans-serif;right:555.22px;transform-origin:right top;transform:scaleX(0.9680);">2022 Actuals</div>
<div class="t" id="t74" style="top:619.0px;font-size:18.5px;color:#444;font-family:'Liberation Sans', sans-serif;right:554.98px;transform-origin:right top;">in Millions</div>
<div class="t" id="t75" style="top:591.8px;font-size:22px;color:#333;font-family:'Liberation Sans', sans-serif;right:411.01px;transform-origin:right top;transform:scaleX(0.9600);">2021 Actuals</div>
<div class="t" id="t76" style="top:619.0px;font-size:18.5px;color:#444;font-family:'Liberation Sans', sans-serif;right:410.78px;transform-origin:right top;">in Millions</div>
<div class="t" id="t77" style="top:591.8px;font-size:22px;color:#333;font-family:'Liberation Sans', sans-serif;right:265.75px;transform-origin:right top;transform:scaleX(0.9588);">2022 Plan</div>
<div class="t" id="t78" style="top:619.0px;font-size:18.5px;color:#444;font-family:'Liberation Sans', sans-serif;right:266.58px;transform-origin:right top;">in Millions</div>
<div class="t" id="t79" style="top:591.8px;font-size:22px;color:#333;font-family:'Liberation Sans', sans-serif;right:122.62px;transform-origin:right top;transform:scaleX(0.9680);">2022 Actuals</div>
<div class="t" id="t80" style="top:619.0px;font-size:18.5px;color:#444;font-family:'Liberation Sans', sans-serif;right:122.38px;transform-origin:right top;">in Millions</div>
<div class="t" id="t81" style="top:664.3px;font-size:22px;color:#333;font-family:'Liberation Sans', sans-serif;left:46.95px;transform-origin:left top;transform:scaleX(0.9466);">United States</div>
<div class="t" id="t82" style="top:664.3px;font-size:22px;color:#333;font-family:'Liberation Sans', sans-serif;left:261.52px;transform-origin:left top;transform:scaleX(0.8837);">East</div>
<div class="t" id="t83" style="top:665.0px;font-size:23.5px;color:#2e2e2e;font-family:'Liberation Mono', monospace;right:1712.39px;transform-origin:right top;transform:scaleX(0.8000);-webkit-text-stroke:0.3px #2e2e2e;">40.18</div>
<div class="t" id="t84" style="top:665.0px;font-size:23.5px;color:#2e2e2e;font-family:'Liberation Mono', monospace;right:1568.19px;transform-origin:right top;transform:scaleX(0.8000);-webkit-text-stroke:0.3px #2e2e2e;">40.08</div>
<div class="t" id="t85" style="top:665.0px;font-size:23.5px;color:#2e2e2e;font-family:'Liberation Mono', monospace;right:1423.99px;transform-origin:right top;transform:scaleX(0.8000);-webkit-text-stroke:0.3px #2e2e2e;">48.44</div>
<div class="t" id="t86" style="top:665.0px;font-size:23.5px;color:#2e2e2e;font-family:'Liberation Mono', monospace;right:1279.79px;transform-origin:right top;transform:scaleX(0.8000);-webkit-text-stroke:0.3px #2e2e2e;">45.95</div>
<div class="t" id="t87" style="top:665.0px;font-size:23.5px;color:#2e2e2e;font-family:'Liberation Mono', monospace;right:1135.59px;transform-origin:right top;transform:scaleX(0.8000);-webkit-text-stroke:0.3px #2e2e2e;">55.73</div>
<div class="t" id="t88" style="top:665.0px;font-size:23.5px;color:#2e2e2e;font-family:'Liberation Mono', monospace;right:991.39px;transform-origin:right top;transform:scaleX(0.8000);-webkit-text-stroke:0.3px #2e2e2e;">52.50</div>
<div class="t" id="t89" style="top:665.0px;font-size:23.5px;color:#2e2e2e;font-family:'Liberation Mono', monospace;right:847.19px;transform-origin:right top;transform:scaleX(0.8000);-webkit-text-stroke:0.3px #2e2e2e;">53.25</div>
<div class="t" id="t90" style="top:665.0px;font-size:23.5px;color:#2e2e2e;font-family:'Liberation Mono', monospace;right:702.99px;transform-origin:right top;transform:scaleX(0.8000);-webkit-text-stroke:0.3px #2e2e2e;">61.40</div>
<div class="t" id="t91" style="top:665.0px;font-size:23.5px;color:#2e2e2e;font-family:'Liberation Mono', monospace;right:558.79px;transform-origin:right top;transform:scaleX(0.8000);-webkit-text-stroke:0.3px #2e2e2e;">49.32</div>
<div class="t" id="t92" style="top:665.0px;font-size:23.5px;color:#2e2e2e;font-family:'Liberation Mono', monospace;right:413.79px;transform-origin:right top;transform:scaleX(0.8000);-webkit-text-stroke:0.3px #2e2e2e;">43.57</div>
<div class="t" id="t93" style="top:665.0px;font-size:23.5px;color:#2e2e2e;font-family:'Liberation Mono', monospace;right:270.39px;transform-origin:right top;transform:scaleX(0.8000);-webkit-text-stroke:0.3px #2e2e2e;">44.13</div>
<div class="t" id="t94" style="top:665.0px;font-size:23.5px;color:#2e2e2e;font-family:'Liberation Mono', monospace;right:126.19px;transform-origin:right top;transform:scaleX(0.8000);-webkit-text-stroke:0.3px #2e2e2e;">37.19</div>
<div class="t" id="t95" style="top:696.8px;font-size:22px;color:#333;font-family:'Liberation Sans', sans-serif;left:46.95px;transform-origin:left top;transform:scaleX(0.9466);">United States</div>
<div class="t" id="t96" style="top:696.8px;font-size:22px;color:#333;font-family:'Liberation Sans', sans-serif;left:261.46px;transform-origin:left top;transform:scaleX(0.9444);">Pacific</div>
<div class="t" id="t97" style="top:697.5px;font-size:23.5px;color:#2e2e2e;font-family:'Liberation Mono', monospace;right:1712.39px;transform-origin:right top;transform:scaleX(0.8000);-webkit-text-stroke:0.3px #2e2e2e;">29.32</div>
<div class="t" id="t98" style="top:697.5px;font-size:23.5px;color:#2e2e2e;font-family:'Liberation Mono', monospace;right:1568.19px;transform-origin:right top;transform:scaleX(0.8000);-webkit-text-stroke:0.3px #2e2e2e;">29.55</div>
<div class="t" id="t99" style="top:697.5px;font-size:23.5px;color:#2e2e2e;font-family:'Liberation Mono', monospace;right:1423.99px;transform-origin:right top;transform:scaleX(0.8000);-webkit-text-stroke:0.3px #2e2e2e;">26.85</div>
<div class="t" id="t100" style="top:697.5px;font-size:23.5px;color:#2e2e2e;font-family:'Liberation Mono', monospace;right:1279.79px;transform-origin:right top;transform:scaleX(0.8000);-webkit-text-stroke:0.3px #2e2e2e;">30.89</div>
<div class="t" id="t101" style="top:697.5px;font-size:23.5px;color:#2e2e2e;font-family:'Liberation Mono', monospace;right:1135.59px;transform-origin:right top;transform:scaleX(0.8000);-webkit-text-stroke:0.3px #2e2e2e;">38.13</div>
<div class="t" id="t102" style="top:697.5px;font-size:23.5px;color:#2e2e2e;font-family:'Liberation Mono', monospace;right:991.39px;transform-origin:right top;transform:scaleX(0.8000);-webkit-text-stroke:0.3px #2e2e2e;">30.73</div>
<div class="t" id="t103" style="top:697.5px;font-size:23.5px;color:#2e2e2e;font-family:'Liberation Mono', monospace;right:847.19px;transform-origin:right top;transform:scaleX(0.8000);-webkit-text-stroke:0.3px #2e2e2e;">37.44</div>
<div class="t" id="t104" style="top:697.5px;font-size:23.5px;color:#2e2e2e;font-family:'Liberation Mono', monospace;right:702.99px;transform-origin:right top;transform:scaleX(0.8000);-webkit-text-stroke:0.3px #2e2e2e;">38.40</div>
<div class="t" id="t105" style="top:697.5px;font-size:23.5px;color:#2e2e2e;font-family:'Liberation Mono', monospace;right:558.79px;transform-origin:right top;transform:scaleX(0.8000);-webkit-text-stroke:0.3px #2e2e2e;">39.05</div>
<div class="t" id="t106" style="top:697.5px;font-size:23.5px;color:#2e2e2e;font-family:'Liberation Mono', monospace;right:414.59px;transform-origin:right top;transform:scaleX(0.8000);-webkit-text-stroke:0.3px #2e2e2e;">26.76</div>
<div class="t" id="t107" style="top:697.5px;font-size:23.5px;color:#2e2e2e;font-family:'Liberation Mono', monospace;right:270.39px;transform-origin:right top;transform:scaleX(0.8000);-webkit-text-stroke:0.3px #2e2e2e;">31.26</div>
<div class="t" id="t108" style="top:697.5px;font-size:23.5px;color:#2e2e2e;font-family:'Liberation Mono', monospace;right:126.19px;transform-origin:right top;transform:scaleX(0.8000);-webkit-text-stroke:0.3px #2e2e2e;">26.24</div>
<div class="t" id="t109" style="top:729.3px;font-size:22px;color:#333;font-family:'Liberation Sans', sans-serif;left:46.95px;transform-origin:left top;transform:scaleX(0.9466);">United States</div>
<div class="t" id="t110" style="top:729.3px;font-size:22px;color:#333;font-family:'Liberation Sans', sans-serif;left:261.41px;transform-origin:left top;transform:scaleX(0.9899);">Central</div>
<div class="t" id="t111" style="top:730.0px;font-size:23.5px;color:#2e2e2e;font-family:'Liberation Mono', monospace;right:1711.59px;transform-origin:right top;transform:scaleX(0.8000);-webkit-text-stroke:0.3px #2e2e2e;">18.97</div>
<div class="t" id="t112" style="top:730.0px;font-size:23.5px;color:#2e2e2e;font-family:'Liberation Mono', monospace;right:1568.19px;transform-origin:right top;transform:scaleX(0.8000);-webkit-text-stroke:0.3px #2e2e2e;">20.10</div>
<div class="t" id="t113" style="top:730.0px;font-size:23.5px;color:#2e2e2e;font-family:'Liberation Mono', monospace;right:1423.99px;transform-origin:right top;transform:scaleX(0.8000);-webkit-text-stroke:0.3px #2e2e2e;">20.85</div>
<div class="t" id="t114" style="top:730.0px;font-size:23.5px;color:#2e2e2e;font-family:'Liberation Mono', monospace;right:1279.79px;transform-origin:right top;transform:scaleX(0.8000);-webkit-text-stroke:0.3px #2e2e2e;">28.89</div>
<div class="t" id="t115" style="top:730.0px;font-size:23.5px;color:#2e2e2e;font-family:'Liberation Mono', monospace;right:1135.59px;transform-origin:right top;transform:scaleX(0.8000);-webkit-text-stroke:0.3px #2e2e2e;">25.39</div>
<div class="t" id="t116" style="top:730.0px;font-size:23.5px;color:#2e2e2e;font-family:'Liberation Mono', monospace;right:991.39px;transform-origin:right top;transform:scaleX(0.8000);-webkit-text-stroke:0.3px #2e2e2e;">34.35</div>
<div class="t" id="t117" style="top:730.0px;font-size:23.5px;color:#2e2e2e;font-family:'Liberation Mono', monospace;right:847.19px;transform-origin:right top;transform:scaleX(0.8000);-webkit-text-stroke:0.3px #2e2e2e;">28.42</div>
<div class="t" id="t118" style="top:730.0px;font-size:23.5px;color:#2e2e2e;font-family:'Liberation Mono', monospace;right:702.99px;transform-origin:right top;transform:scaleX(0.8000);-webkit-text-stroke:0.3px #2e2e2e;">33.29</div>
<div class="t" id="t119" style="top:730.0px;font-size:23.5px;color:#2e2e2e;font-family:'Liberation Mono', monospace;right:558.79px;transform-origin:right top;transform:scaleX(0.8000);-webkit-text-stroke:0.3px #2e2e2e;">27.14</div>
<div class="t" id="t120" style="top:730.0px;font-size:23.5px;color:#2e2e2e;font-family:'Liberation Mono', monospace;right:414.59px;transform-origin:right top;transform:scaleX(0.8000);-webkit-text-stroke:0.3px #2e2e2e;">23.30</div>
<div class="t" id="t121" style="top:730.0px;font-size:23.5px;color:#2e2e2e;font-family:'Liberation Mono', monospace;right:270.39px;transform-origin:right top;transform:scaleX(0.8000);-webkit-text-stroke:0.3px #2e2e2e;">22.23</div>
<div class="t" id="t122" style="top:730.0px;font-size:23.5px;color:#2e2e2e;font-family:'Liberation Mono', monospace;right:126.19px;transform-origin:right top;transform:scaleX(0.8000);-webkit-text-stroke:0.3px #2e2e2e;">18.36</div>
<div class="t" id="t123" style="top:761.8px;font-size:22px;color:#333;font-family:'Liberation Sans', sans-serif;left:46.95px;transform-origin:left top;transform:scaleX(0.9466);">United States</div>
<div class="t" id="t124" style="top:761.8px;font-size:22px;color:#333;font-family:'Liberation Sans', sans-serif;left:261.41px;transform-origin:left top;transform:scaleX(0.9875);">Midwest</div>
<div class="t" id="t125" style="top:762.5px;font-size:23.5px;color:#2e2e2e;font-family:'Liberation Mono', monospace;right:1712.39px;transform-origin:right top;transform:scaleX(0.8000);-webkit-text-stroke:0.3px #2e2e2e;">18.01</div>
<div class="t" id="t126" style="top:762.5px;font-size:23.5px;color:#2e2e2e;font-family:'Liberation Mono', monospace;right:1567.39px;transform-origin:right top;transform:scaleX(0.8000);-webkit-text-stroke:0.3px #2e2e2e;">18.27</div>
<div class="t" id="t127" style="top:762.5px;font-size:23.5px;color:#2e2e2e;font-family:'Liberation Mono', monospace;right:1423.99px;transform-origin:right top;transform:scaleX(0.8000);-webkit-text-stroke:0.3px #2e2e2e;">14.70</div>
<div class="t" id="t128" style="top:762.5px;font-size:23.5px;color:#2e2e2e;font-family:'Liberation Mono', monospace;right:1279.79px;transform-origin:right top;transform:scaleX(0.8000);-webkit-text-stroke:0.3px #2e2e2e;">19.85</div>
<div class="t" id="t129" style="top:762.5px;font-size:23.5px;color:#2e2e2e;font-family:'Liberation Mono', monospace;right:1135.59px;transform-origin:right top;transform:scaleX(0.8000);-webkit-text-stroke:0.3px #2e2e2e;">26.20</div>
<div class="t" id="t130" style="top:762.5px;font-size:23.5px;color:#2e2e2e;font-family:'Liberation Mono', monospace;right:991.39px;transform-origin:right top;transform:scaleX(0.8000);-webkit-text-stroke:0.3px #2e2e2e;">26.08</div>
<div class="t" id="t131" style="top:762.5px;font-size:23.5px;color:#2e2e2e;font-family:'Liberation Mono', monospace;right:847.19px;transform-origin:right top;transform:scaleX(0.8000);-webkit-text-stroke:0.3px #2e2e2e;">23.56</div>
<div class="t" id="t132" style="top:762.5px;font-size:23.5px;color:#2e2e2e;font-family:'Liberation Mono', monospace;right:702.99px;transform-origin:right top;transform:scaleX(0.8000);-webkit-text-stroke:0.3px #2e2e2e;">27.91</div>
<div class="t" id="t133" style="top:762.5px;font-size:23.5px;color:#2e2e2e;font-family:'Liberation Mono', monospace;right:558.79px;transform-origin:right top;transform:scaleX(0.8000);-webkit-text-stroke:0.3px #2e2e2e;">30.93</div>
<div class="t" id="t134" style="top:762.5px;font-size:23.5px;color:#2e2e2e;font-family:'Liberation Mono', monospace;right:413.79px;transform-origin:right top;transform:scaleX(0.8000);-webkit-text-stroke:0.3px #2e2e2e;">18.67</div>
<div class="t" id="t135" style="top:762.5px;font-size:23.5px;color:#2e2e2e;font-family:'Liberation Mono', monospace;right:270.39px;transform-origin:right top;transform:scaleX(0.8000);-webkit-text-stroke:0.3px #2e2e2e;">15.39</div>
<div class="t" id="t136" style="top:762.5px;font-size:23.5px;color:#2e2e2e;font-family:'Liberation Mono', monospace;right:126.19px;transform-origin:right top;transform:scaleX(0.8000);-webkit-text-stroke:0.3px #2e2e2e;">16.61</div>
<div class="t" id="t137" style="top:794.3px;font-size:22px;color:#333;font-family:'Liberation Sans', sans-serif;left:45.87px;transform-origin:left top;transform:scaleX(1.0169);">International</div>
<div class="t" id="t138" style="top:794.3px;font-size:22px;color:#333;font-family:'Liberation Sans', sans-serif;left:261.51px;transform-origin:left top;transform:scaleX(0.8871);">EMEA</div>
<div class="t" id="t139" style="top:795.0px;font-size:23.5px;color:#2e2e2e;font-family:'Liberation Mono', monospace;right:1712.39px;transform-origin:right top;transform:scaleX(0.8000);-webkit-text-stroke:0.3px #2e2e2e;">45.39</div>
<div class="t" id="t140" style="top:795.0px;font-size:23.5px;color:#2e2e2e;font-family:'Liberation Mono', monospace;right:1568.19px;transform-origin:right top;transform:scaleX(0.8000);-webkit-text-stroke:0.3px #2e2e2e;">50.81</div>
<div class="t" id="t141" style="top:795.0px;font-size:23.5px;color:#2e2e2e;font-family:'Liberation Mono', monospace;right:1423.99px;transform-origin:right top;transform:scaleX(0.8000);-webkit-text-stroke:0.3px #2e2e2e;">52.09</div>
<div class="t" id="t142" style="top:795.0px;font-size:23.5px;color:#2e2e2e;font-family:'Liberation Mono', monospace;right:1279.79px;transform-origin:right top;transform:scaleX(0.8000);-webkit-text-stroke:0.3px #2e2e2e;">57.32</div>
<div class="t" id="t143" style="top:795.0px;font-size:23.5px;color:#2e2e2e;font-family:'Liberation Mono', monospace;right:1134.79px;transform-origin:right top;transform:scaleX(0.8000);-webkit-text-stroke:0.3px #2e2e2e;">67.37</div>
<div class="t" id="t144" style="top:795.0px;font-size:23.5px;color:#2e2e2e;font-family:'Liberation Mono', monospace;right:991.39px;transform-origin:right top;transform:scaleX(0.8000);-webkit-text-stroke:0.3px #2e2e2e;">67.40</div>
<div class="t" id="t145" style="top:795.0px;font-size:23.5px;color:#2e2e2e;font-family:'Liberation Mono', monospace;right:847.19px;transform-origin:right top;transform:scaleX(0.8000);-webkit-text-stroke:0.3px #2e2e2e;">64.02</div>
<div class="t" id="t146" style="top:795.0px;font-size:23.5px;color:#2e2e2e;font-family:'Liberation Mono', monospace;right:702.19px;transform-origin:right top;transform:scaleX(0.8000);-webkit-text-stroke:0.3px #2e2e2e;">64.47</div>
<div class="t" id="t147" style="top:795.0px;font-size:23.5px;color:#2e2e2e;font-family:'Liberation Mono', monospace;right:558.79px;transform-origin:right top;transform:scaleX(0.8000);-webkit-text-stroke:0.3px #2e2e2e;">64.19</div>
<div class="t" id="t148" style="top:795.0px;font-size:23.5px;color:#2e2e2e;font-family:'Liberation Mono', monospace;right:413.79px;transform-origin:right top;transform:scaleX(0.8000);-webkit-text-stroke:0.3px #2e2e2e;">47.27</div>
<div class="t" id="t149" style="top:795.0px;font-size:23.5px;color:#2e2e2e;font-family:'Liberation Mono', monospace;right:270.39px;transform-origin:right top;transform:scaleX(0.8000);-webkit-text-stroke:0.3px #2e2e2e;">56.66</div>
<div class="t" id="t150" style="top:795.0px;font-size:23.5px;color:#2e2e2e;font-family:'Liberation Mono', monospace;right:126.19px;transform-origin:right top;transform:scaleX(0.8000);-webkit-text-stroke:0.3px #2e2e2e;">50.76</div>
<div class="t" id="t151" style="top:826.8px;font-size:22px;color:#333;font-family:'Liberation Sans', sans-serif;left:45.87px;transform-origin:left top;transform:scaleX(1.0169);">International</div>
<div class="t" id="t152" style="top:826.8px;font-size:22px;color:#333;font-family:'Liberation Sans', sans-serif;left:262.40px;transform-origin:left top;transform:scaleX(0.8621);">APAC</div>
<div class="t" id="t153" style="top:827.5px;font-size:23.5px;color:#2e2e2e;font-family:'Liberation Mono', monospace;right:1712.39px;transform-origin:right top;transform:scaleX(0.8000);-webkit-text-stroke:0.3px #2e2e2e;">20.59</div>
<div class="t" id="t154" style="top:827.5px;font-size:23.5px;color:#2e2e2e;font-family:'Liberation Mono', monospace;right:1568.19px;transform-origin:right top;transform:scaleX(0.8000);-webkit-text-stroke:0.3px #2e2e2e;">20.64</div>
<div class="t" id="t155" style="top:827.5px;font-size:23.5px;color:#2e2e2e;font-family:'Liberation Mono', monospace;right:1423.99px;transform-origin:right top;transform:scaleX(0.8000);-webkit-text-stroke:0.3px #2e2e2e;">24.95</div>
<div class="t" id="t156" style="top:827.5px;font-size:23.5px;color:#2e2e2e;font-family:'Liberation Mono', monospace;right:1279.79px;transform-origin:right top;transform:scaleX(0.8000);-webkit-text-stroke:0.3px #2e2e2e;">30.88</div>
<div class="t" id="t157" style="top:827.5px;font-size:23.5px;color:#2e2e2e;font-family:'Liberation Mono', monospace;right:1135.59px;transform-origin:right top;transform:scaleX(0.8000);-webkit-text-stroke:0.3px #2e2e2e;">29.65</div>
<div class="t" id="t158" style="top:827.5px;font-size:23.5px;color:#2e2e2e;font-family:'Liberation Mono', monospace;right:991.39px;transform-origin:right top;transform:scaleX(0.8000);-webkit-text-stroke:0.3px #2e2e2e;">27.44</div>
<div class="t" id="t159" style="top:827.5px;font-size:23.5px;color:#2e2e2e;font-family:'Liberation Mono', monospace;right:847.19px;transform-origin:right top;transform:scaleX(0.8000);-webkit-text-stroke:0.3px #2e2e2e;">27.38</div>
<div class="t" id="t160" style="top:827.5px;font-size:23.5px;color:#2e2e2e;font-family:'Liberation Mono', monospace;right:702.99px;transform-origin:right top;transform:scaleX(0.8000);-webkit-text-stroke:0.3px #2e2e2e;">37.46</div>
<div class="t" id="t161" style="top:827.5px;font-size:23.5px;color:#2e2e2e;font-family:'Liberation Mono', monospace;right:558.79px;transform-origin:right top;transform:scaleX(0.8000);-webkit-text-stroke:0.3px #2e2e2e;">32.63</div>
<div class="t" id="t162" style="top:827.5px;font-size:23.5px;color:#2e2e2e;font-family:'Liberation Mono', monospace;right:414.59px;transform-origin:right top;transform:scaleX(0.8000);-webkit-text-stroke:0.3px #2e2e2e;">22.03</div>
<div class="t" id="t163" style="top:827.5px;font-size:23.5px;color:#2e2e2e;font-family:'Liberation Mono', monospace;right:270.39px;transform-origin:right top;transform:scaleX(0.8000);-webkit-text-stroke:0.3px #2e2e2e;">27.92</div>
<div class="t" id="t164" style="top:827.5px;font-size:23.5px;color:#2e2e2e;font-family:'Liberation Mono', monospace;right:126.19px;transform-origin:right top;transform:scaleX(0.8000);-webkit-text-stroke:0.3px #2e2e2e;">26.51</div>
<div class="t" id="t165" style="top:859.3px;font-size:22px;color:#222;font-family:'Liberation Sans', sans-serif;font-weight:700;left:47.90px;transform-origin:left top;transform:scaleX(0.9200);">Total</div>
<div class="t" id="t166" style="top:860.0px;font-size:23.5px;color:#222;font-family:'Liberation Mono', monospace;font-weight:700;right:1712.30px;transform-origin:right top;transform:scaleX(0.8000);">172.46</div>
<div class="t" id="t167" style="top:860.0px;font-size:23.5px;color:#222;font-family:'Liberation Mono', monospace;font-weight:700;right:1568.10px;transform-origin:right top;transform:scaleX(0.8000);">179.45</div>
<div class="t" id="t168" style="top:860.0px;font-size:23.5px;color:#222;font-family:'Liberation Mono', monospace;font-weight:700;right:1423.10px;transform-origin:right top;transform:scaleX(0.8000);">187.87</div>
<div class="t" id="t169" style="top:860.0px;font-size:23.5px;color:#222;font-family:'Liberation Mono', monospace;font-weight:700;right:1279.70px;transform-origin:right top;transform:scaleX(0.8000);">213.78</div>
<div class="t" id="t170" style="top:860.0px;font-size:23.5px;color:#222;font-family:'Liberation Mono', monospace;font-weight:700;right:1135.50px;transform-origin:right top;transform:scaleX(0.8000);">242.48</div>
<div class="t" id="t171" style="top:860.0px;font-size:23.5px;color:#222;font-family:'Liberation Mono', monospace;font-weight:700;right:991.30px;transform-origin:right top;transform:scaleX(0.8000);">238.50</div>
<div class="t" id="t172" style="top:860.0px;font-size:23.5px;color:#222;font-family:'Liberation Mono', monospace;font-weight:700;right:847.10px;transform-origin:right top;transform:scaleX(0.8000);">234.06</div>
<div class="t" id="t173" style="top:860.0px;font-size:23.5px;color:#222;font-family:'Liberation Mono', monospace;font-weight:700;right:702.90px;transform-origin:right top;transform:scaleX(0.8000);">262.93</div>
<div class="t" id="t174" style="top:860.0px;font-size:23.5px;color:#222;font-family:'Liberation Mono', monospace;font-weight:700;right:558.70px;transform-origin:right top;transform:scaleX(0.8000);">243.26</div>
<div class="t" id="t175" style="top:860.0px;font-size:23.5px;color:#222;font-family:'Liberation Mono', monospace;font-weight:700;right:414.50px;transform-origin:right top;transform:scaleX(0.8000);">181.60</div>
<div class="t" id="t176" style="top:860.0px;font-size:23.5px;color:#222;font-family:'Liberation Mono', monospace;font-weight:700;right:270.30px;transform-origin:right top;transform:scaleX(0.8000);">197.58</div>
<div class="t" id="t177" style="top:860.0px;font-size:23.5px;color:#222;font-family:'Liberation Mono', monospace;font-weight:700;right:125.30px;transform-origin:right top;transform:scaleX(0.8000);">175.67</div>
<div class="t" id="t178" style="top:1159.8px;font-size:23px;color:#333;font-family:'Liberation Sans', sans-serif;left:2145.44px;transform-origin:left top;transform:scaleX(0.8783);">Page 1 of 2</div>
<svg class="r" style="left:2122px;top:1156px;" width="22" height="28" viewBox="0 0 22 28"><polyline points="15,4 6,14 15,24" fill="none" stroke="#a8a8a8" stroke-width="2.6"/></svg>
<svg class="r" style="left:2252px;top:1156px;" width="22" height="28" viewBox="0 0 22 28"><polyline points="6,4 15,14 6,24" fill="none" stroke="#2a2a2a" stroke-width="3.4"/></svg>
<div class="r" style="left:41px;top:1236px;width:82px;height:45px;background:#fff;"></div>
<div class="r" style="left:41px;top:1277px;width:82px;height:4px;background:#0f6cbd;"></div>
<svg class="r" style="left:70px;top:1240px;" width="30" height="30" viewBox="0 0 30 30"><rect x="10.5" y="4.5" width="15" height="14" fill="#fff" stroke="#444" stroke-width="1.5"/><rect x="4.8" y="10.5" width="14" height="15.5" fill="#fff" stroke="#444" stroke-width="1.5"/><line x1="7" y1="22" x2="17" y2="22" stroke="#0f6cbd" stroke-width="1.5"/></svg>
<svg class="r" style="left:136px;top:1244px;" width="26" height="26" viewBox="0 0 26 26"><line x1="13" y1="2" x2="13" y2="24" stroke="#333" stroke-width="1.6"/><line x1="2" y1="13" x2="24" y2="13" stroke="#333" stroke-width="1.6"/></svg>
<div class="r" style="left:175px;top:1240px;width:1px;height:33px;background:#e6e6e6;"></div>
<svg class="r" style="left:2262px;top:1240px;" width="34" height="36" viewBox="0 0 34 36"><rect x="1" y="3" width="6" height="6" fill="#e2e2e2"/><rect x="13" y="3" width="6" height="6" fill="#e2e2e2"/><rect x="1" y="15" width="6" height="6" fill="#e2e2e2"/><rect x="1" y="26" width="8" height="8" fill="#f5a3a3"/><rect x="13" y="15" width="8" height="19" fill="#f6d58c"/><rect x="25" y="2" width="9" height="32" fill="#aee3a6"/></svg>
<div class="r" style="left:1152px;top:130px;width:196px;height:289px;background:#fff;border-radius:3px;box-shadow:0 0 2px rgba(0,0,0,0.2),0 3px 8px rgba(0,0,0,0.25)"></div>
<div class="t" id="t179" style="top:147.4px;font-size:21.5px;color:#222;font-family:'Liberation Sans', sans-serif;left:1167.78px;transform-origin:left top;transform:scaleX(1.0154);">None - 0px</div>
<div class="t" id="t180" style="top:205.0px;font-size:21.5px;color:#222;font-family:'Liberation Sans', sans-serif;left:1167.78px;transform-origin:left top;transform:scaleX(1.0224);">Narrow - 10px</div>
<div class="t" id="t181" style="top:262.6px;font-size:21.5px;color:#222;font-family:'Liberation Sans', sans-serif;left:1167.78px;transform-origin:left top;transform:scaleX(1.0224);">Normal - 20px</div>
<div class="t" id="t182" style="top:320.2px;font-size:21.5px;color:#222;font-family:'Liberation Sans', sans-serif;left:1168.80px;transform-origin:left top;">Wide - 30px</div>
<svg class="r" style="left:1304px;top:204px;" width="30" height="22" viewBox="0 0 30 22"><polyline points="4,12 11,19 26,3" fill="none" stroke="#333" stroke-width="1.6"/></svg>
<div class="r" style="left:1153px;top:361px;width:194px;height:1.5px;background:#e2e2e2;"></div>
<div class="t" id="t183" style="top:377.5px;font-size:21.5px;color:#222;font-family:'Liberation Sans', sans-serif;left:1167.83px;transform-origin:left top;transform:scaleX(0.9722);">Custom</div>
<div class="r" style="left:1149px;top:365px;width:149px;height:54px;background:transparent;border:3px solid #f2121a;border-radius:5px"></div>
</body></html>
